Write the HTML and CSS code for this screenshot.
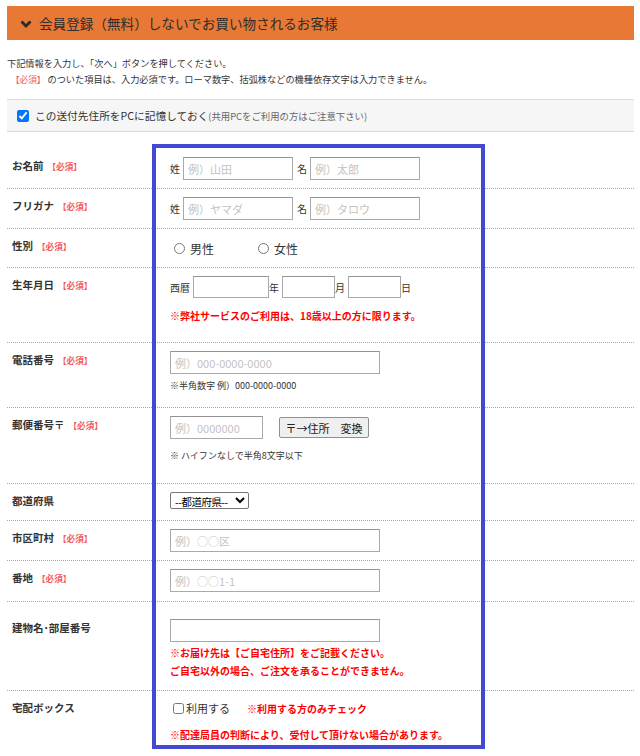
FILE: index.html
```html
<!DOCTYPE html>
<html lang="ja">
<head>
  <meta charset="UTF-8" />
  <meta name="viewport" content="width=device-width, initial-scale=1.0" />
  <title>お届け先の入力</title>
  <link rel="stylesheet" href="styles.css">
</head>
<body>
<div class="page">
  <h2 class="section-head">
    <svg class="chev" width="12" height="8" viewBox="0 0 12 8"><polyline points="1.5,1.5 6,6 10.5,1.5" fill="none" stroke="#2a2a2a" stroke-width="2.8"/></svg>
    会員登録（無料）しないでお買い物されるお客様
  </h2>

  <p class="lead">下記情報を入力し、「次へ」ボタンを押してください。<br>
    <span class="lead-req"><span class="req">【必須】</span> のついた項目は、入力必須です。ローマ数字、括弧株などの機種依存文字は入力できません。</span></p>

  <label class="remember">
    <input type="checkbox" checked>この送付先住所をPCに記憶しておく<small>(共用PCをご利用の方はご注意下さい)</small>
  </label>

  <div class="form">
    <div class="row">
      <div class="label">お名前<span class="req">【必須】</span></div>
      <div class="field">
        <span class="unit">姓</span><input class="text w-name" placeholder="例）山田">
        <span class="unit next">名</span><input class="text w-name" placeholder="例）太郎">
      </div>
    </div>

    <div class="row">
      <div class="label">フリガナ<span class="req">【必須】</span></div>
      <div class="field">
        <span class="unit">姓</span><input class="text w-name" placeholder="例）ヤマダ">
        <span class="unit next">名</span><input class="text w-name" placeholder="例）タロウ">
      </div>
    </div>

    <div class="row">
      <div class="label">性別<span class="req">【必須】</span></div>
      <div class="field radios">
        <label class="radio"><input type="radio" name="sex">男性</label>
        <label class="radio"><input type="radio" name="sex">女性</label>
      </div>
    </div>

    <div class="row">
      <div class="label">生年月日<span class="req">【必須】</span></div>
      <div>
        <div class="field birth">
          <span class="unit">西暦</span><input class="text date w-year">
          <span class="unit">年</span><input class="text date w-md">
          <span class="unit">月</span><input class="text date w-md">
          <span class="unit">日</span>
        </div>
        <p class="warn birth-warn">※弊社サービスのご利用は、18歳以上の方に限ります。</p>
      </div>
    </div>

    <div class="row">
      <div class="label">電話番号<span class="req">【必須】</span></div>
      <div>
        <input class="text w-wide" placeholder="例）000-0000-0000">
        <p class="hint tel-hint">※半角数字 例）000-0000-0000</p>
      </div>
    </div>

    <div class="row">
      <div class="label">郵便番号〒<span class="req">【必須】</span></div>
      <div>
        <div class="field">
          <input class="text w-zip" placeholder="例）0000000">
          <button class="zip-btn" type="button">〒→住所　変換</button>
        </div>
        <p class="hint zip-hint">※ ハイフンなしで半角8文字以下</p>
      </div>
    </div>

    <div class="row">
      <div class="label">都道府県</div>
      <div>
        <select class="pref">
          <option>--都道府県--</option>
        </select>
      </div>
    </div>

    <div class="row">
      <div class="label">市区町村<span class="req">【必須】</span></div>
      <div><input class="text w-wide" placeholder="例）○○区"></div>
    </div>

    <div class="row row-addr">
      <div class="label">番地<span class="req">【必須】</span></div>
      <div><input class="text w-wide" placeholder="例）○○1-1"></div>
    </div>

    <div class="row row-building">
      <div class="label">建物名･部屋番号</div>
      <div>
        <input class="text w-wide">
        <p class="warn building-warn">※お届け先は【ご自宅住所】をご記載ください。<br>ご自宅以外の場合、ご注文を承ることができません。</p>
      </div>
    </div>

    <div class="row row-box">
      <div class="label">宅配ボックス</div>
      <div>
        <div class="field box-line">
          <label class="box-check"><input type="checkbox">利用する</label>
          <span class="warn">※利用する方のみチェック</span>
        </div>
        <p class="warn box-warn">※配達局員の判断により、受付して頂けない場合があります。</p>
      </div>
    </div>
  </div>

  <div class="focus-frame"></div>
</div>
</body>
</html>
```

FILE: styles.css
```css
body {
  margin: 0;
  font-family: "Noto Sans CJK JP", "Liberation Sans", sans-serif;
  color: #333;
  background-color: #fff;
}
.page {
  position: relative;
  padding: 6px 6px 0 7px;
}
.section-head {
  margin: 0;
  height: 34px;
  display: flex;
  align-items: center;
  padding-left: 13px;
  background-color: #e87835;
  font-size: 13.6px;
  font-weight: normal;
  color: #2e2e2e;
}
.chev {
  margin: 2px 7px 0 0;
}
.lead {
  margin: 15px 0 0;
  font-size: 9.2px;
  line-height: 16px;
}
.lead-req {
  padding-left: 4px;
}
.req {
  color: #f45a5a;
  font-size: 8.6px;
  margin-left: 4px;
}
.lead-req .req {
  margin-left: 0;
}
.remember {
  margin-top: 12px;
  height: 31px;
  display: flex;
  align-items: center;
  padding-left: 10px;
  background-color: #f6f6f6;
  border-top: 1px solid #dcdcdc;
  border-bottom: 1px solid #dcdcdc;
  font-size: 10.7px;
}
.remember input {
  width: 12px;
  height: 12px;
  margin: 0 6px 0 0;
}
.remember small {
  font-size: 9.4px;
  color: #666;
}
.form {
  margin-top: 17px;
}
.row {
  display: grid;
  grid-template-columns: 163px 1fr;
  padding: 8px 0;
  border-bottom: 1px dotted #a8a8a8;
}
.label {
  padding-left: 5px;
  font-size: 10.5px;
  font-weight: bold;
  line-height: 18px;
}
.field {
  display: flex;
  align-items: center;
  font-size: 10px;
}
.unit {
  margin-right: 3px;
}
.next {
  margin-left: 4px;
}
.text {
  box-sizing: border-box;
  height: 23px;
  padding: 0 4px;
  border: 1px solid #a9a9a9;
  border-top-color: #949494;
  font: 11px "Noto Sans CJK JP", "Liberation Sans", sans-serif;
  color: #333;
}
.text::placeholder {
  color: #c3c3c3;
}
.w-name { width: 110px; }
.w-wide { width: 210px; display: block; }
.w-zip { width: 93px; }
.w-year { width: 76px; }
.w-md { width: 53px; }
.date {
  height: 22px;
}
.radios {
  height: 22px;
  font-size: 12px;
}
.radio {
  display: flex;
  align-items: center;
  margin-right: 40px;
}
.radio input {
  width: 11px;
  height: 11px;
  margin: 0 5px 0 4px;
}
.warn {
  color: #f00;
  font-size: 10px;
  font-weight: bold;
}
.hint {
  font-size: 9px;
  color: #333;
}
p.warn, p.hint {
  margin: 0;
  line-height: 16px;
}
.birth-warn {
  margin: 10px 0 10px !important;
}
.tel-hint {
  margin: 4px 0 5px !important;
}
.zip-hint {
  margin: 9px 0 11px !important;
}
.zip-btn {
  margin-left: 16px;
  width: 90px;
  height: 21px;
  padding: 0;
  border: 1px solid #8f8f8f;
  border-radius: 2px;
  background-color: #efefef;
  font: 11px "Noto Sans CJK JP", "Liberation Sans", sans-serif;
  color: #222;
}
.pref {
  display: block;
  width: 79px;
  height: 17px;
  margin-bottom: 3px;
  padding: 0;
  font: 10.4px "Noto Sans CJK JP", "Liberation Sans", sans-serif;
  letter-spacing: -0.4px;
  color: #000;
  border: 1px solid #767676;
  border-radius: 2px;
  background-color: #fff;
}
.row-addr {
  padding-bottom: 9px;
}
.row-building {
  padding-top: 17px;
}
.building-warn {
  line-height: 18px !important;
  margin: 2px 0 2px !important;
}
.row-box {
  border-bottom: none;
}
.box-line {
  height: 18px;
}
.box-check {
  display: flex;
  align-items: center;
  margin-right: 17px;
  font-size: 11px;
}
.box-check input {
  width: 11px;
  height: 11px;
  margin: 0 2px 0 3px;
}
.box-warn {
  margin-top: 9px !important;
  line-height: 18px !important;
}
.focus-frame {
  position: absolute;
  left: 152px;
  top: 144px;
  width: 333px;
  height: 605px;
  box-sizing: border-box;
  border: 4px solid #4349d1;
  pointer-events: none;
}
```
